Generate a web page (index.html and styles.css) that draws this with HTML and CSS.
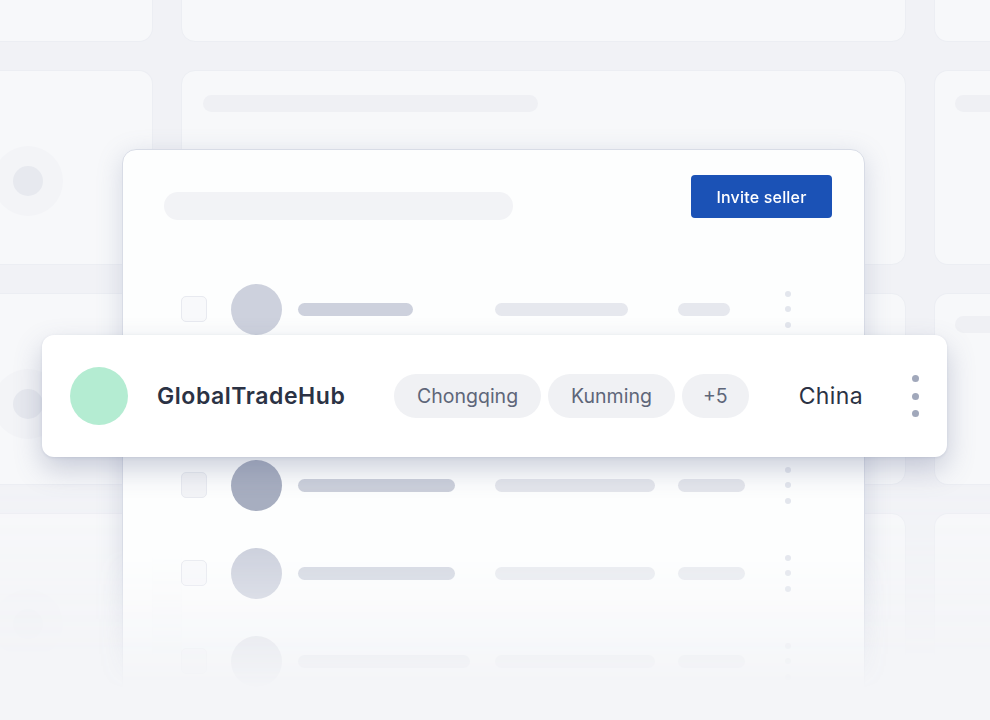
FILE: index.html
```html
<!DOCTYPE html>
<html lang="en">
<head>
<meta charset="utf-8">
<title>Sellers</title>
<link rel="stylesheet" href="styles.css">
</head>
<body>
<div class="stage">
  <div class="bg-grid">
    <div class="bgc bgc-left"></div>
    <div class="bgc"></div>
    <div class="bgc bgc-right"></div>

    <div class="bgc bgc-left"><div class="ring"><div class="ring-dot"></div></div></div>
    <div class="bgc bgc-mid"><div class="bg-bar bg-bar-wide"></div></div>
    <div class="bgc bgc-right"><div class="bg-bar"></div></div>

    <div class="bgc bgc-left"><div class="ring"><div class="ring-dot"></div></div></div>
    <div class="bgc bgc-mid"></div>
    <div class="bgc bgc-right bgc-right-low"><div class="bg-bar"></div></div>

    <div class="bgc bgc-left"><div class="ring ring-faint"><div class="ring-dot"></div></div></div>
    <div class="bgc bgc-mid"></div>
    <div class="bgc bgc-right"></div>
  </div>

  <div class="card-wrap">
    <div class="card">
      <div class="card-head">
        <div class="sk-title"></div>
        <button class="btn">Invite seller</button>
      </div>
      <div class="rows">
        <div class="row r1">
          <div class="chk"></div>
          <div class="av"></div>
          <div class="cell c-name"><div class="bar b1"></div></div>
          <div class="cell c-city"><div class="bar b2"></div></div>
          <div class="cell c-country"><div class="bar b3"></div></div>
          <div class="dots"><i></i><i></i><i></i></div>
        </div>
        <div class="row row-ghost"></div>
        <div class="row r3">
          <div class="chk"></div>
          <div class="av"></div>
          <div class="cell c-name"><div class="bar b1"></div></div>
          <div class="cell c-city"><div class="bar b2"></div></div>
          <div class="cell c-country"><div class="bar b3"></div></div>
          <div class="dots"><i></i><i></i><i></i></div>
        </div>
        <div class="row r4">
          <div class="chk"></div>
          <div class="av"></div>
          <div class="cell c-name"><div class="bar b1"></div></div>
          <div class="cell c-city"><div class="bar b2"></div></div>
          <div class="cell c-country"><div class="bar b3"></div></div>
          <div class="dots"><i></i><i></i><i></i></div>
        </div>
        <div class="row r5">
          <div class="chk"></div>
          <div class="av"></div>
          <div class="cell c-name"><div class="bar b1"></div></div>
          <div class="cell c-city"><div class="bar b2"></div></div>
          <div class="cell c-country"><div class="bar b3"></div></div>
          <div class="dots"><i></i><i></i><i></i></div>
        </div>
      </div>
    </div>
  </div>

  <div class="highlight">
    <div class="hl-avatar"></div>
    <div class="hl-name">GlobalTradeHub</div>
    <div class="chips">
      <span class="chip">Chongqing</span>
      <span class="chip">Kunming</span>
      <span class="chip chip-more">+5</span>
    </div>
    <div class="hl-country">China</div>
    <div class="hl-dots"><i></i><i></i><i></i></div>
  </div>
</div>
</body>
</html>
```

FILE: styles.css
```css
* { box-sizing: border-box; }

html, body {
  margin: 0;
  padding: 0;
  background: #f4f5f8;
}

body {
  font-family: Inter, "Noto Sans", "Liberation Sans", sans-serif;
}

.stage {
  position: relative;
  width: 990px;
  height: 720px;
  overflow: hidden;
  background: #f4f5f8;
}

/* background grid of faint cards */
.bg-grid {
  display: grid;
  grid-template-columns: 153px 725px 200px;
  grid-template-rows: 102px 195px 192px 200px;
  column-gap: 28px;
  row-gap: 28px;
  margin-top: -60px;
  background: #f1f2f6;
  -webkit-mask-image: linear-gradient(to bottom, #000 0, #000 540px, rgba(0,0,0,0) 720px);
  mask-image: linear-gradient(to bottom, #000 0, #000 540px, rgba(0,0,0,0) 720px);
}

.bgc {
  background: #f7f8fa;
  border: 1px solid #eceef3;
  border-radius: 14px;
}

.bgc-left {
  border-top-left-radius: 0;
  border-bottom-left-radius: 0;
  border-left: none;
  padding: 75px 0 0 0;
  overflow: hidden;
}

.ring {
  width: 70px;
  height: 70px;
  margin-left: -7px;
  border-radius: 50%;
  background: #f3f4f7;
  display: flex;
  align-items: center;
  justify-content: center;
}

.ring-dot {
  width: 30px;
  height: 30px;
  border-radius: 50%;
  background: #e7e9ef;
}

.ring-faint {
  opacity: 0.5;
}

.bgc-mid {
  padding: 24px 0 0 21px;
}

.bgc-right {
  padding: 24px 0 0 20px;
  border-top-right-radius: 0;
  border-bottom-right-radius: 0;
  border-right: none;
}

.bgc-right-low {
  padding-top: 22px;
}

.bg-bar {
  height: 17px;
  border-radius: 9px;
  background: #eff0f4;
}

.bg-bar-wide {
  width: 335px;
}

/* main card */
.card-wrap {
  position: absolute;
  left: 82px;
  top: 109px;
  padding: 40px;
  -webkit-mask-image: linear-gradient(to bottom, #000 0, #000 440px, rgba(0,0,0,0) 580px);
  mask-image: linear-gradient(to bottom, #000 0, #000 440px, rgba(0,0,0,0) 580px);
}

.card {
  width: 743px;
  background: #fdfefe;
  border: 1px solid #d8dce6;
  border-radius: 14px;
  padding: 25px 32px 40px 41px;
  box-shadow: 0 6px 26px rgba(110, 122, 160, 0.24);
}

.card-head {
  display: flex;
  justify-content: space-between;
  align-items: flex-start;
}

.sk-title {
  width: 349px;
  height: 28px;
  margin-top: 17px;
  border-radius: 14px;
  background: #f2f3f6;
}

.btn {
  width: 141px;
  height: 43px;
  border: none;
  border-radius: 4px;
  background: #1b52b6;
  color: #fff;
  font-family: Inter, "Noto Sans", sans-serif;
  font-size: 16px;
  font-weight: 500;
  letter-spacing: 0.2px;
  padding: 0;
}

.rows {
  margin-top: 45px;
}

.row {
  height: 88px;
  display: flex;
  align-items: center;
  padding-left: 17px;
}

.chk {
  width: 26px;
  height: 26px;
  border-radius: 5px;
  border: 1px solid #e8eaf0;
  background: #f8f9fb;
}

.av {
  width: 51px;
  height: 51px;
  border-radius: 50%;
  margin-left: 24px;
  background: #cdd1dd;
}

.c-name {
  margin-left: 16px;
  width: 197px;
}

.c-city {
  width: 183px;
}

.c-country {
  width: 107px;
}

.bar {
  height: 13px;
  border-radius: 7px;
}

.dots {
  display: flex;
  flex-direction: column;
  gap: 9.5px;
}

.dots i {
  display: block;
  width: 6px;
  height: 6px;
  border-radius: 50%;
  background: #e3e6ed;
}

.r1 .b1 { width: 115px; background: #cdd1dd; }
.r1 .b2 { width: 133px; background: #e6e8ee; }
.r1 .b3 { width: 52px; background: #e6e8ee; }

.r3 .av { background: #a7aec0; }
.r3 .b1 { width: 157px; background: #ccd0db; }
.r3 .b2 { width: 160px; background: #e4e6ec; }
.r3 .b3 { width: 67px; background: #e4e6ec; }
.r3 .chk { background: #f3f4f7; }

.r4 .av { background: #cdd1dd; }
.r4 .b1 { width: 157px; background: #d4d8e2; }
.r4 .b2 { width: 160px; background: #e9ebf0; }
.r4 .b3 { width: 67px; background: #e9ebf0; }

.r5 .av { background: #dde0e7; }
.r5 .b1 { width: 172px; background: #e6e8ee; }
.r5 .b2 { width: 160px; background: #eceef2; }
.r5 .b3 { width: 67px; background: #eceef2; }
.r5 .chk { border-color: #f0f1f4; }
.r5 .dots i { background: #eceef2; }

/* highlighted row */
.highlight {
  position: absolute;
  left: 42px;
  top: 335px;
  width: 905px;
  height: 122px;
  background: #fff;
  border-radius: 12px;
  display: flex;
  align-items: center;
  padding: 0 28px;
  box-shadow: 0 12px 28px rgba(90, 100, 140, 0.30), 0 1px 3px rgba(95, 106, 145, 0.14);
}

.hl-avatar {
  width: 58px;
  height: 58px;
  border-radius: 50%;
  background: #b4ecd2;
  flex: none;
}

.hl-name {
  margin-left: 29px;
  width: 237px;
  font-size: 23px;
  font-weight: 600;
  color: #2b3244;
  letter-spacing: 0.55px;
}

.chips {
  display: flex;
  gap: 7px;
}

.chip {
  height: 44px;
  padding: 0 23px;
  border-radius: 22px;
  background: #f0f1f4;
  color: #5e6679;
  font-size: 19.5px;
  display: flex;
  align-items: center;
}

.chip-more {
  padding: 0 21px;
}

.hl-country {
  margin-left: 50px;
  font-size: 23px;
  letter-spacing: 0.4px;
  color: #2b3244;
}

.hl-dots {
  margin-left: auto;
  display: flex;
  flex-direction: column;
  gap: 10.5px;
}

.hl-dots i {
  display: block;
  width: 7px;
  height: 7px;
  border-radius: 50%;
  background: #a1a8bb;
}
```
